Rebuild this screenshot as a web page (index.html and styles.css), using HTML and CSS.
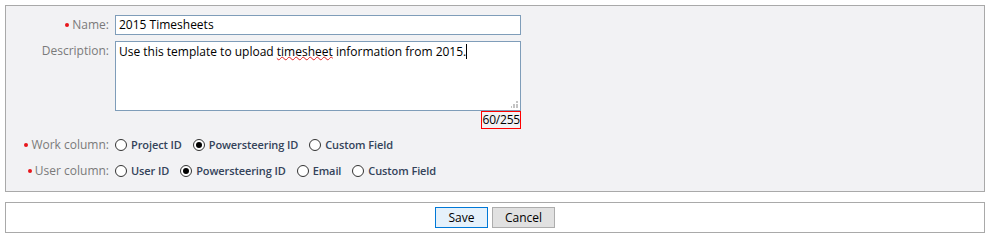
FILE: index.html
```html
<!DOCTYPE html>
<html>
<head>
<meta charset="utf-8">
<link rel="stylesheet" href="styles.css">
</head>
<body>
<div class="page">
  <form class="panel form-panel">
    <div class="grid">
      <label class="lbl"><span class="req"></span>Name:</label>
      <div class="field"><div class="text-input">2015 Timesheets</div></div>

      <label class="lbl">Description:</label>
      <div class="field">
        <div class="textarea">Use this template to upload <span class="spell">timesheet</span> information from 2015.<span class="caret"></span>
          <svg class="grip" width="7" height="7" viewBox="0 0 7 7"><rect x="5" y="0" width="2" height="2" fill="#c4c4c4"/><rect x="2" y="3" width="2" height="2" fill="#c4c4c4"/><rect x="5" y="3" width="2" height="2" fill="#c4c4c4"/><rect x="0" y="5" width="1" height="2" fill="#c4c4c4"/><rect x="2" y="5" width="2" height="2" fill="#c4c4c4"/><rect x="5" y="5" width="2" height="2" fill="#c4c4c4"/></svg>
        </div>
        <div class="counter-wrap"><span class="counter">60/255</span></div>
      </div>

      <label class="lbl radio-lbl"><span class="req"></span>Work column:</label>
      <div class="radios">
        <span class="opt"><span class="radio"></span>Project ID</span>
        <span class="opt"><span class="radio on"></span>Powersteering ID</span>
        <span class="opt"><span class="radio"></span>Custom Field</span>
      </div>

      <label class="lbl radio-lbl"><span class="req"></span>User column:</label>
      <div class="radios">
        <span class="opt"><span class="radio"></span>User ID</span>
        <span class="opt"><span class="radio on"></span>Powersteering ID</span>
        <span class="opt"><span class="radio"></span>Email</span>
        <span class="opt"><span class="radio"></span>Custom Field</span>
      </div>
    </div>
  </form>
  <div class="panel action-panel">
    <button class="btn btn-primary" type="button">Save</button>
    <button class="btn" type="button">Cancel</button>
  </div>
</div>
</body>
</html>
```
FILE: styles.css
```css
html, body {
  margin: 0;
  padding: 0;
  background: #fff;
}
body {
  font-family: "Open Sans", "Noto Sans", sans-serif;
  color: #000;
}
.page {
  padding: 5px;
  width: 980px;
  display: flex;
  flex-direction: column;
  gap: 10px;
}
.panel {
  border: 1px solid #a9a9a9;
  box-sizing: border-box;
}
.form-panel {
  margin: 0;
  background: #f2f2f4;
  padding: 9px 0 11px 0;
  height: 187px;
}
.grid {
  display: grid;
  grid-template-columns: 103px 406px;
  column-gap: 6px;
  row-gap: 6px;
  align-items: start;
}
.lbl {
  justify-self: end;
  font-size: 12px;
  color: #7a7a7a;
  line-height: 20px;
  display: flex;
  align-items: center;
  gap: 3px;
  white-space: nowrap;
}
.req {
  width: 4px;
  height: 4px;
  border-radius: 50%;
  background: #e8161b;
}
.text-input {
  height: 20px;
  box-sizing: border-box;
  border: 1px solid #7f9db9;
  background: #fff;
  font-size: 12px;
  line-height: 18px;
  padding: 0 3px;
}
.textarea {
  position: relative;
  height: 70px;
  box-sizing: border-box;
  border: 1px solid #7f9db9;
  background: #fff;
  font-size: 12px;
  line-height: 17px;
  padding: 1px 3px;
}
.spell {
  text-decoration: underline wavy #e02020;
  text-decoration-thickness: 1px;
  text-underline-offset: 0px;
}
.caret {
  display: inline-block;
  width: 1px;
  height: 15px;
  background: #000;
  vertical-align: -3px;
}
.grip {
  position: absolute;
  right: 2px;
  bottom: 2px;
}
.counter-wrap {
  display: flex;
  justify-content: flex-end;
}
.counter {
  border: 1px solid #ff0000;
  font-size: 12px;
  line-height: 16px;
  padding: 0;
  letter-spacing: -0.2px;
}
.radio-lbl {
  margin-top: -1px;
  line-height: 21px;
}
.radios {
  margin-top: -1px;
  display: flex;
  align-items: center;
  gap: 11px;
  height: 21px;
  font-size: 11px;
  font-weight: 600;
  color: #34435a;
  letter-spacing: -0.1px;
}
.opt {
  display: flex;
  align-items: center;
  gap: 4px;
  white-space: nowrap;
}
.radio {
  width: 12px;
  height: 12px;
  box-sizing: border-box;
  border: 1px solid #333;
  border-radius: 50%;
  background: #fff;
  position: relative;
}
.radio.on::after {
  content: "";
  position: absolute;
  left: 2px;
  top: 2px;
  width: 6px;
  height: 6px;
  border-radius: 50%;
  background: #000;
}
.action-panel {
  background: #fff;
  height: 31px;
  display: flex;
  justify-content: center;
  align-items: center;
  gap: 4px;
}
.btn {
  font-family: "Open Sans", "Noto Sans", sans-serif;
  font-size: 12px;
  color: #000;
  height: 21px;
  padding: 0;
  border: 1px solid #adadad;
  background: #e1e1e1;
  width: 63px;
  line-height: 18px;
}
.btn-primary {
  width: 53px;
  background: #e5f1fb;
  border-color: #0078d7;
}
```
